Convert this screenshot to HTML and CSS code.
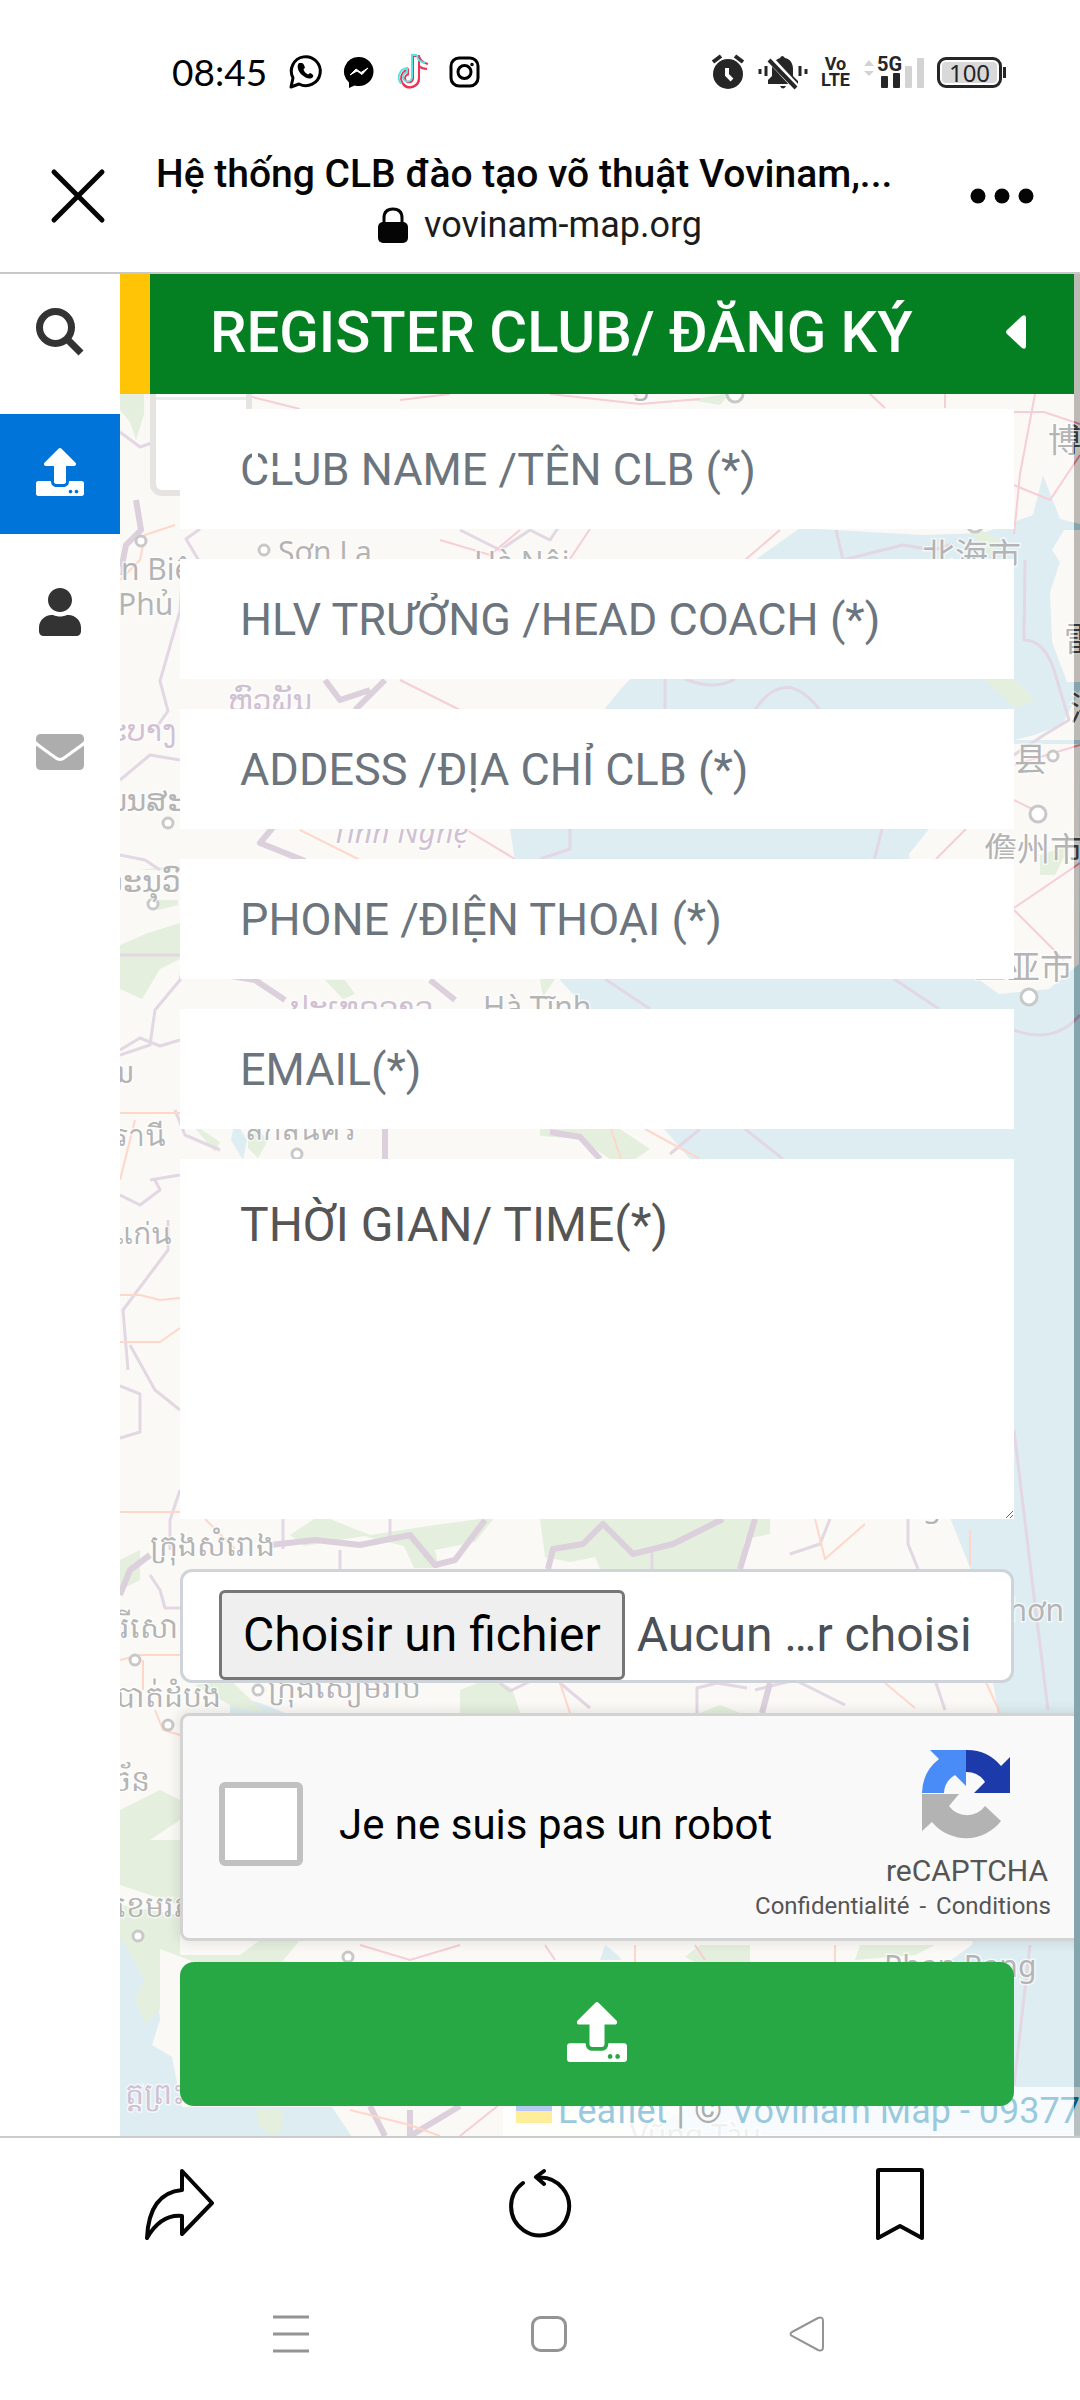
FILE: index.html
```html
<!DOCTYPE html>
<html lang="vi">
<head>
<meta charset="utf-8">
<meta name="viewport" content="width=device-width, initial-scale=1">
<title>Hệ thống CLB đào tạo võ thuật Vovinam</title>
<link rel="stylesheet" href="styles.css">
</head>
<body>
<svg class="defs" width="0" height="0" aria-hidden="true">
  <symbol id="upload" viewBox="0 0 512 512"><path d="M296 384h-80c-13.300 0-24-10.700-24-24V192h-87.700c-17.800 0-26.700-21.500-14.100-34.100L242.300 5.700c7.500-7.500 19.800-7.500 27.300 0l152.200 152.200c12.600 12.600 3.700 34.100-14.100 34.100H320v168c0 13.300-10.700 24-24 24zm216-8v112c0 13.300-10.700 24-24 24H24c-13.300 0-24-10.700-24-24V376c0-13.300 10.700-24 24-24h136v8c0 30.900 25.100 56 56 56h80c30.900 0 56-25.100 56-56v-8h136c13.300 0 24 10.700 24 24zm-124 88c0-11-9-20-20-20s-20 9-20 20 9 20 20 20 20-9 20-20zm64 0c0-11-9-20-20-20s-20 9-20 20 9 20 20 20 20-9 20-20z"/></symbol>
</svg>

<div class="status">
  <div class="status-side">
    <span class="clock">08:45</span>
    <svg width="36" height="36" viewBox="0 0 36 36" fill="none" stroke="#000" stroke-width="3"><path d="M4 33l2-9A14.500 14.500 0 1 1 12 30z" stroke-linejoin="round"/><path d="M12 10c-3 3-.500 9 3 12s8 5 11 2c1-2-.500-3-3-4l-2 1.500c-2-1-4-3-4.500-5l1.500-2c-1-3-2-5-4-4.500" fill="#000" stroke="none" transform="translate(0 -1)"/></svg>
    <svg width="32" height="36" viewBox="0 0 32 36"><path d="M16 3a14.500 14.500 0 0 1 0 29c-1.500 0-3 0-4.500-.500L6 34v-5.500A14.500 14.500 0 0 1 16 3z"/><path d="M7 21l6-6 5 3.500 7-4.500-6 6.500-5-3.500z" fill="#fff" stroke="#fff" stroke-linejoin="round"/></svg>
    <svg width="34" height="38" viewBox="0 0 34 38" fill="none" stroke-width="2"><path d="M23 3v21a9 9 0 1 1-11-8.500v5a4 4 0 1 0 5 3.500V2h6c1 5 4 7 9 8" stroke="#ee3355" transform="translate(1 1)"/><path d="M31 15c-3 0-6-1-8-3v12a9 9 0 0 1-16 6" stroke="#ee3355" transform="translate(1 1)"/><path d="M22 2h-5v22a4.500 4.500 0 1 1-5-4.500v-4.500a9.500 9.500 0 0 0-6 15.500M22 2c0 4 3 7 8 8" stroke="#5be4e2"/></svg>
    <svg width="31" height="36" viewBox="0 0 31 36" fill="none" stroke="#000" stroke-width="3"><rect x="2" y="4" width="27" height="28" rx="8"/><circle cx="15.500" cy="18" r="6.500"/><circle cx="23" cy="10.500" r="1" stroke-width="1.500"/></svg>
  </div>
  <div class="status-side status-right">
    <svg width="34" height="36" viewBox="0 0 34 36"><circle cx="17" cy="20" r="15" fill="#262626"/><path d="M2 8l8-6M32 8l-8-6" stroke="#262626" stroke-width="4"/><path d="M16 14v7l5 5" fill="none" stroke="#fff" stroke-width="4"/></svg>
    <svg width="50" height="36" viewBox="0 0 50 36"><path d="M10 30v-4l4-4v-7c0-7 5-10 8-11q2-4 5 0c5 1 8 5 8 11v7l5 5v3zM22 32h6q-3 5-6 0z" fill="#262626"/><path d="M12 5l26 28" stroke="#fff" stroke-width="7"/><path d="M11 6l27 28" stroke="#262626" stroke-width="4"/><path d="M2 15v5M8 12v10M42 12v10M48 15v5" stroke="#262626" stroke-width="3"/></svg>
    <span class="volte">Vo<br>LTE</span>
    <span class="signal">
      <svg width="61" height="36" viewBox="0 0 61 36"><path d="M1 12l5-6 5 6zM1 17h10l-5 5z" fill="#d3d3d3"/><rect x="18" y="22" width="7" height="12" rx="1" fill="#262626"/><rect x="30" y="19" width="7" height="15" rx="1" fill="#262626"/><rect x="42" y="12" width="7" height="22" rx="1" fill="#d3d3d3"/><rect x="54" y="4" width="7" height="30" rx="1" fill="#d3d3d3"/></svg>
      <span class="net">5G</span>
    </span>
    <span class="battery">100</span>
  </div>
</div>

<header class="topbar">
  <button class="icon-btn" aria-label="Close"><svg width="56" height="56" viewBox="0 0 56 56" stroke="#050505" stroke-width="5" stroke-linecap="round"><path d="M4 4l48 48M52 4L4 52"/></svg></button>
  <div class="site">
    <div class="site-title">Hệ thống CLB đào tạo võ thuật Vovinam,...</div>
    <div class="site-url"><svg width="30" height="36" viewBox="0 0 30 36"><rect y="15" width="30" height="21" rx="5" fill="#050505"/><path d="M6 17v-6q0-9 9-9t9 9v6" fill="none" stroke="#050505" stroke-width="3"/></svg>vovinam-map.org</div>
  </div>
  <button class="icon-btn" aria-label="More"><svg width="64" height="16" viewBox="0 0 64 16" fill="#050505"><circle cx="8" cy="8" r="7.500"/><circle cx="32" cy="8" r="7.500"/><circle cx="56" cy="8" r="7.500"/></svg></button>
</header>

<main class="view">
  <div class="map">
    <svg class="map-art" viewBox="120 274 960 1862" preserveAspectRatio="xMinYMin slice" aria-hidden="true">
      <rect x="120" y="274" width="960" height="1862" fill="#f2efe9"/>
      <g fill="#aad3df">
        <path d="M800 528l-45 32-70 60-65 70-90 110-15 60 45 120 55 60 50 90 30 35 120 150 130 190 24 60 15 70 13 70 5 120-20 80-10 40-140 100-140 60-50 30h438V274l0 250-20-5-17-44-10 40-50 18-60 2z"/>
        <path d="M120 1935l15-5 20 30 5 60-8 25 20 12 10 50 150 0 20 30H120z"/>
        <path d="M510 829h20v32h-15zM230 1695l30 8 30 12h-60zM605 1945q20 15 15 15h-20zM235 1120l12 20-4 20-12-20z"/>
      </g>
      <g fill="#f2efe9">
        <path d="M1064 530l-12 20 8 12-10 30 2 50 15 40 13 0v-152z"/>
        <path d="M929 829l-20 25 15 110 50 12 25 18 50-5 30-25 1-220-65 0z"/>
        <path d="M1080 690v50h-66l20-5 28-10z"/>
      </g>
      <g fill="#bbd7aa">
        <path d="M120 394h24v20l-8 26-6-18-10-12zM140 870l40-5v5h-40zM148 900h30v5l-20 5zM120 945l28-12 32-10v36l-20 10-18 30-22-10zM120 1560l20-10v30l-20 10zM120 1810l40-20 20 10v20l-30 20h30v65l-60-20zM120 1905l60 10v40h60l20-15h40l-20 24h-80l-40-15v60l-15 15-10-25 10-20-30-50zM258 2110l25 0-2 20-10 6-13-12zM195 1685l35-5 35 33-30-5z"/>
        <path d="M290 1535l30-20 50 20 65-10 60-8-20 25-40 8 4 18h-25l-10-22-40-10-60 10zM540 1519h230v15l-25 5-5 30H600l-5-12-25 5-25-5zM460 1690l30-12 22 10 8 25h-60zM740 1713h-40l20-8zM700 1945h50v17h-55l-10-5zM540 979h15l-12 18zM325 980l20 0 10 14-12 5zM540 1129h80l30 20-15 10h-25l-30-20-40-3zM190 1122l30 20-5 10zM248 1120l20 20-10 18-10-10zM690 400l40-7-10 12zM960 520l40 20-10 16zM985 680l30 0 20 20-20 8zM1040 855l30-10-15 30-15 0zM860 1945h75l-20 10-60 5z"/>
      </g>
      <g fill="none" stroke="#b99bb9" stroke-width="3" stroke-linejoin="round">
        <path d="M120 432l20 15 15-5 5-10M200 529l-14 10 12 20 2 10-18 12-2 30-20 70 8 30-14 20M120 780l30-25 30 5M120 855l25 5 15 10M120 955l60 0M120 1055l30-10 5-35 25-30 5-20M120 1050l20-12 20 8 20-6M175 1110l10 25 35 15M150 1180l30-5M120 1195l20 10 20-15-5-10M168 1220l0 30-45 60 5 60M120 1386l20 8 0 38-20 6M130 1345l25 45 25 20M180 1490l-10 30 0 30M150 1575l10 15 5 18 15 0M283 1519v30M390 1519v20M340 1550v20M652 1550v20M830 1519l-10 25-30 10M908 1519l0 25 10 25M697 1713l0-25 20-5 30 5M755 1690l40-10 50 25M935 1680l10 30M500 1683l10 8 25-12M560 1683l30 25"/>
        <path d="M460 530l40 20 30-20 20 10 20-30M836 530l7 30 60-15 30 5 20-6M665 679v32M685 679q30 12 50 0M755 710q30-45 65 0M1025 560l-1 80q20 0 30 30l15 50-25 15-30 20M882 829l-8 32M570 829v20l-30 10M605 979l45 30M894 979l45 30M1014 1030q40 15 66-15M700 1129l-30 25M745 1129l38 30M1014 1430l18 150 16 130M1030 1945l-16 140"/>
      </g>
      <g fill="none" stroke="#a58aa5" stroke-width="6" stroke-linejoin="round"><path d="M136 500l5 30-15 15-6 30M325 680l15 20 30-10M355 710l30-30M275 825l-15 18 45 18M225 975l30 5 30 20M430 980l25 20M550 1132l30 5 20 22M385 1129v30M270 1545l45-5 45 5 50-10 25 30 20-5 30-40M548 1569l5-20 30-5 20-20 30 30 40-10 50-25M740 1569l15-50M770 1683l-8 30M120 1595l10-25 20-15M370 2106l15 30M410 2110v26l50-30"/></g>
      <g fill="none" stroke="#ec8299" stroke-width="2">
        <path d="M240 394l60 15M400 400l50-6M550 394l90 10 60-5M640 400l-10-10M870 394l15 14M945 390v18M1035 394l-15 80-6 60M1014 412h30l36 12M1080 455l-30 45-36-15M590 529l-20 30M780 530l-35 30M440 540l50 15 30-25M400 680l60 30M465 829l50 30M966 829l-30 30M1014 908l66-45M1014 910l50 50M1014 800l30 15M545 1945l10 15M695 1945l10 15M360 1945l50 15 50-15M460 2136l50-40M1014 765l66-20"/>
        <path stroke="#ff9c7c" d="M120 580l20-20 5-25 30-10M120 1113h60M135 1120l-15 60M120 1342h40l20-14M120 1295l20 0 20 5 20-2M120 1512h60M205 1519l30 30M120 1660l20-5 40 0M143 1660v30M155 1710l8 20 17 5M300 830l60 30 80 0M611 1129l10 30M645 1129l55 30M815 1519l10 40 40-35M970 1530l0 35M885 1683l30 25M985 1680l15 33M560 1683l10 30M635 1945v17M835 1945v17M350 2110l60 15 30 11"/>
      </g>
      <g fill="#fff" stroke="#777" stroke-width="3"><circle cx="141" cy="541" r="5"/><circle cx="264" cy="550" r="5"/><circle cx="168" cy="823" r="5"/><circle cx="153" cy="904" r="5"/><circle cx="297" cy="1154" r="5"/><circle cx="135" cy="1660" r="5"/><circle cx="258" cy="1690" r="5"/><circle cx="168" cy="1725" r="5"/><circle cx="138" cy="1936" r="5"/><circle cx="348" cy="1957" r="5"/><circle cx="735" cy="394" r="8"/><circle cx="1053" cy="756" r="5"/><circle cx="1038" cy="814" r="8"/><circle cx="1029" cy="997" r="8"/><circle cx="975" cy="524" r="8"/></g>
      <g class="place">
        <text x="104" y="580">ện Biên</text><text x="118" y="615">Phủ</text><text x="278" y="563">Sơn La</text><text x="474" y="573">Hà Nội</text>
        <text x="106" y="811">ພນສະ</text><text x="104" y="892">ອະນຸວົງ</text><text x="114" y="1083">ນ</text><text x="112" y="1146">รานี</text><text x="245" y="1140">สกลนคร</text><text x="114" y="1244">แก่น</text>
        <text x="483" y="1018">Hà Tĩnh</text><text x="150" y="1556">ក្រុងសំរោង</text><text x="120" y="1638">រីសោភ័ណ</text><text x="116" y="1707">បាត់ដំបង</text><text x="268" y="1698">ក្រុងសៀមរាប</text><text x="112" y="1791">ច័ន</text><text x="116" y="1917">ខេមរភូមិន្ទ</text>
        <text class="cjk" x="1048" y="452">博白</text><text class="cjk" x="922" y="567">北海市</text><text class="cjk" x="1064" y="651">雷</text><text class="cjk" x="1070" y="720">湛</text><text class="cjk" x="1014" y="771">县</text><text class="cjk" x="984" y="861">儋州市</text><text class="cjk" x="974" y="979">三亚市</text>
        <text x="990" y="1621">nhơn</text><text x="884" y="1977">Phan Rang</text><text x="900" y="1517">Ngãi</text><text x="630" y="2146">Vũng Tàu</text><text x="632" y="394">g</text>
      </g>
      <g class="place region"><text x="228" y="711">ຫົວພັນ</text><text x="108" y="741">ະບາງ</text><text x="332" y="843" font-style="italic">Tỉnh Nghệ</text><text x="290" y="1018">ປະເທດລາວ</text><text x="125" y="2104">ត្តព្រះ</text></g>
    </svg>
    <div class="zoom-box"><span></span></div>
    <div class="attribution"><span class="flag"></span><a href="#leaflet">Leaflet</a> | © <a href="#vovinam">Vovinam Map - 09377</a></div>
  </div>

  <nav class="tabs">
    <a href="#search" aria-label="Search"><svg width="48" height="48" viewBox="0 0 48 48" fill="none" stroke="#333"><circle cx="19.500" cy="19.500" r="16" stroke-width="7"/><path d="M31 31l14 14" stroke-width="7"/></svg></a>
    <a href="#register" class="active" aria-label="Register"><svg width="48" height="48" fill="#fff"><use href="#upload"/></svg></a>
    <a href="#user" aria-label="User"><svg width="42" height="48" viewBox="0 0 448 512" fill="#333"><path d="M224 256c70.700 0 128-57.300 128-128S294.700 0 224 0 96 57.300 96 128s57.300 128 128 128zm89.600 32h-16.700c-22.200 10.200-46.900 16-72.900 16s-50.600-5.800-72.900-16h-16.700C60.200 288 0 348.200 0 422.400V464c0 26.500 21.500 48 48 48h352c26.500 0 48-21.500 48-48v-41.600c0-74.200-60.200-134.400-134.400-134.400z"/></svg></a>
    <a href="#mail" aria-label="Mail"><svg width="48" height="48" viewBox="0 0 512 512" fill="#adadad"><path d="M502.300 190.800c3.900-3.100 9.700-.200 9.700 4.700V400c0 26.500-21.500 48-48 48H48c-26.500 0-48-21.500-48-48V195.600c0-5 5.700-7.800 9.700-4.700 22.400 17.400 52.100 39.500 154.100 113.600 21.100 15.400 56.700 47.800 92.200 47.600 35.700.300 72-32.800 92.300-47.600 102-74.100 131.600-96.300 154-113.700zM256 320c23.200.400 56.600-29.200 73.400-41.400 132.700-96.300 142.800-104.700 173.400-128.700 5.800-4.500 9.200-11.500 9.200-18.900v-19c0-26.500-21.500-48-48-48H48c-26.500 0-48 21.500-48 48v19c0 7.400 3.400 14.300 9.200 18.900 30.600 23.900 40.700 32.400 173.400 128.700 16.800 12.200 50.200 41.800 73.400 41.400z"/></svg></a>
  </nav>

  <section class="panel">
    <div class="panel-head">
      <h1>REGISTER CLUB/ ĐĂNG KÝ</h1>
      <button class="collapse" aria-label="Collapse"><svg width="20" height="34" viewBox="0 0 20 34" fill="#fff"><path d="M1 15L16 1q4-2 4 2v28q0 4-4 2L1 19q-2-2 0-4z"/></svg></button>
    </div>
    <form class="form">
      <div class="field glare"><input type="text" placeholder="CLUB NAME /TÊN CLB (*)" aria-label="Club name"></div>
      <div class="field"><input type="text" placeholder="HLV TRƯỞNG /HEAD COACH (*)" aria-label="Head coach"></div>
      <div class="field"><input type="text" placeholder="ADDESS /ĐỊA CHỈ CLB (*)" aria-label="Address"></div>
      <div class="field"><input type="tel" placeholder="PHONE /ĐIỆN THOẠI (*)" aria-label="Phone"></div>
      <div class="field"><input type="email" placeholder="EMAIL(*)" aria-label="Email"></div>
      <textarea aria-label="Time">THỜI GIAN/ TIME(*)</textarea>
      <label class="file"><input type="file" class="hidden-file"><span class="file-btn">Choisir un fichier</span><span>Aucun …r choisi</span></label>
      <div class="captcha">
        <input type="checkbox" id="robot"><label for="robot">Je ne suis pas un robot</label>
        <div class="brand">
          <svg width="90" height="90" viewBox="0 0 90 90"><path d="M45 1A44 44 0 0 1 80 17l9-9v36H53l11-11A22 22 0 0 0 45 23z" fill="#1c3aa9"/><path d="M45 1v36L34 26a22 22 0 0 0-11 18H1A44 44 0 0 1 18 10L9 1z" fill="#4a8cf7"/><path d="M1 45h37L28 57a22 22 0 0 0 36 0l16 15A44 44 0 0 1 11 73l-10 9z" fill="#b3b3b3"/></svg>
          <span class="brand-name">reCAPTCHA</span>
          <span class="terms"><a href="#privacy">Confidentialité</a><span>-</span><a href="#terms">Conditions</a></span>
        </div>
      </div>
      <button class="submit" type="submit" aria-label="Submit"><svg width="60" height="60" fill="#fff"><use href="#upload"/></svg></button>
    </form>
  </section>
</main>

<footer class="toolbar">
  <button class="icon-btn" aria-label="Share"><svg width="72" height="72" viewBox="0 0 72 72" fill="none" stroke="#050505" stroke-width="4" stroke-linejoin="round"><path d="M38 3l30 32-30 31V48Q17 46 3 70 5 25 38 22z"/></svg></button>
  <button class="icon-btn" aria-label="Reload"><svg width="72" height="72" viewBox="0 0 72 72" fill="none" stroke="#050505" stroke-width="4" stroke-linecap="round" stroke-linejoin="round"><path d="M19 15A29 29 0 1 0 34 9.500M40 3l-8 6 8 7"/></svg></button>
  <button class="icon-btn" aria-label="Save"><svg width="72" height="72" viewBox="0 0 72 72" fill="none" stroke="#050505" stroke-width="4" stroke-linejoin="round"><path d="M15 2h42q1 0 1 1v67L36 58 14 70V3q0-1 1-1z"/></svg></button>
</footer>
<div class="system" role="toolbar" aria-label="System">
  <button class="icon-btn" aria-label="Recents"><svg width="36" height="38" viewBox="0 0 36 38" stroke="#949494" stroke-width="3"><path d="M0 2h36M0 19h36M0 36h36"/></svg></button>
  <button class="icon-btn" aria-label="Home"><svg width="36" height="36" viewBox="0 0 36 36" fill="none" stroke="#949494" stroke-width="3"><rect x="1.500" y="1.500" width="33" height="33" rx="8"/></svg></button>
  <button class="icon-btn" aria-label="Back"><svg width="36" height="36" viewBox="0 0 36 36" fill="none" stroke="#949494" stroke-width="2"><path d="M3 16L29 2q5-2 5 3v26q0 5-5 3L3 20q-3-2 0-4z"/></svg></button>
</div>
</body>
</html>
```
FILE: styles.css
```css
* { box-sizing: border-box; }
body { margin: 0; font-family: Roboto, "Noto Sans", sans-serif; background: #fff; color: #050505; }
svg { display: block; flex: none; }
button { border: 0; padding: 0; background: none; font: inherit; }
a { text-decoration: none; color: inherit; }
.defs { position: absolute; }

.status { height: 144px; padding: 0 78px 0 172px; display: flex; justify-content: space-between; align-items: center; }
.status-side { display: flex; align-items: center; gap: 20px; }
.clock { font: 37px/40px Lato, sans-serif; color: #000; }
.status-right { gap: 13px; color: #262626; }
.volte { font-weight: 700; font-size: 18px; line-height: 16px; text-align: center; }
.signal { position: relative; }
.net { position: absolute; left: 14px; top: 0; font-weight: 700; font-size: 20px; line-height: 20px; }
.battery { position: relative; width: 65px; height: 31px; border: 3px solid #262626; border-radius: 9px; background: #d9d9d9; background-clip: content-box; padding: 2px; font: 24px/22px "Noto Sans", sans-serif; text-align: center; }
.battery::after { content: ""; position: absolute; right: -7px; top: 7px; width: 3px; height: 11px; background: #262626; }

.topbar { height: 130px; display: flex; justify-content: space-between; align-items: flex-start; padding: 4px 46px 0 50px; border-bottom: 2px solid #c8c8c8; }
.topbar .icon-btn { height: 96px; display: flex; align-items: center; }
.site { flex: 1; padding: 0 46px 0 50px; }
.site-title { font-weight: 500; font-size: 39px; line-height: 52px; white-space: nowrap; }
.site-url { display: flex; justify-content: center; align-items: center; gap: 16px; font-size: 36px; line-height: 50px; color: #1c1c1c; }

.view { position: relative; display: flex; overflow: hidden; }
.map { position: absolute; inset: 0 0 0 120px; overflow: hidden; }
.map-art { width: 100%; height: 100%; }
.place { font-family: "Noto Sans", "DejaVu Sans", "Noto Sans CJK SC", sans-serif; font-size: 30px; fill: #444; stroke: #fff; stroke-width: 3px; stroke-opacity: .6; paint-order: stroke; }
.cjk { font-size: 33px; }
.region { fill: #8b6590; }
.zoom-box { position: absolute; left: 30px; top: 24px; width: 102px; height: 198px; border: 6px solid #bdbbb8; border-radius: 12px; background: #fff; }
.zoom-box span { display: block; margin-top: 93px; height: 3px; background: #ccc; }
.attribution { position: absolute; right: 0; bottom: 0; padding: 0 0 0 13px; background: rgba(255, 255, 255, .8); font-size: 36px; line-height: 49px; white-space: nowrap; color: #333; }
.attribution a { color: #0078a8; }
.flag { display: inline-block; width: 36px; height: 24px; margin-right: 6px; background: linear-gradient(#4c7be1 50%, #ffd500 50%); }

.tabs { position: relative; width: 120px; flex: none; display: flex; flex-direction: column; gap: 20px; background: #fff; }
.tabs a { height: 120px; display: flex; align-items: center; justify-content: center; padding-bottom: 4px; }
.tabs .active { background: #0074d9; }

.panel { position: relative; flex: 1; min-width: 0; background: rgba(255, 255, 255, .6); background-clip: padding-box; border-right: 6px solid rgba(0, 0, 0, .22); overflow: hidden; }
.panel-head { height: 120px; border-left: 30px solid #ffc405; background: #048022; color: #fff; display: flex; align-items: center; justify-content: space-between; padding: 0 48px 4px 60px; }
h1 { margin: 0; font-weight: 500; font-size: 58px; line-height: 60px; white-space: nowrap; }
.form { padding: 15px 60px 30px; display: flex; flex-direction: column; }
.field { position: relative; margin-bottom: 30px; }
.field input { display: block; width: 100%; height: 120px; border: 0; background: #fff; padding: 0 60px; font: 45px/60px Roboto, sans-serif; }
.field input::placeholder { color: #6c757d; opacity: 1; }
.glare::before, .glare::after { content: ""; position: absolute; background: #fff; }
.glare::before { left: 72px; top: 40px; width: 6px; height: 14px; }
.glare::after { left: 78px; top: 57px; width: 42px; height: 6px; }
textarea { display: block; width: 100%; height: 360px; border: 0; padding: 36px 60px; background: #fff; color: #555; font: 48px/60px Roboto, sans-serif; resize: vertical; }
.file { margin-top: 50px; height: 114px; border: 3px solid #ced4da; border-radius: 12px; background: #fff; display: flex; align-items: center; gap: 12px; padding: 18px 0 0 36px; font-size: 48px; line-height: 84px; color: #495057; overflow: hidden; white-space: nowrap; }
.hidden-file { position: absolute; width: 1px; height: 1px; opacity: 0; }
.file-btn { border: 3px solid #767676; border-radius: 6px; background: #efefef; color: #000; padding: 0 21px; }
.captcha { width: 912px; height: 228px; margin-top: 30px; border: 3px solid #d3d3d3; border-radius: 9px; background: #f9f9f9; box-shadow: 0 0 12px 3px rgba(0, 0, 0, .08); display: flex; align-items: center; padding: 0 38px 6px 36px; font-size: 42px; color: #000; white-space: nowrap; }
.captcha input { appearance: none; flex: none; width: 84px; height: 84px; margin: 0 36px 0 0; border: 6px solid #c1c1c1; border-radius: 6px; background: #fff; }
/* the terms line may reach in under the end of the label */
.brand { margin: 24px 0 0 auto; width: 160px; display: flex; flex-direction: column; align-items: flex-end; color: #555; }
.brand svg { margin-right: 40px; }
.brand-name { font-size: 30px; line-height: 36px; margin: 14px 3px 0 0; }
.terms { display: flex; gap: 10px; font-size: 24px; line-height: 34px; }
.submit { margin-top: 21px; height: 144px; border-radius: 14px; background: #28a745; display: flex; align-items: center; justify-content: center; padding-bottom: 4px; }

.toolbar { border-top: 2px solid #ccc; height: 138px; display: grid; grid-template-columns: repeat(3, 1fr); justify-items: center; align-items: center; padding-bottom: 4px; }
.system { height: 126px; padding: 0 144px 6px 162px; display: grid; grid-template-columns: repeat(3, 1fr); justify-items: center; align-items: center; }
```
